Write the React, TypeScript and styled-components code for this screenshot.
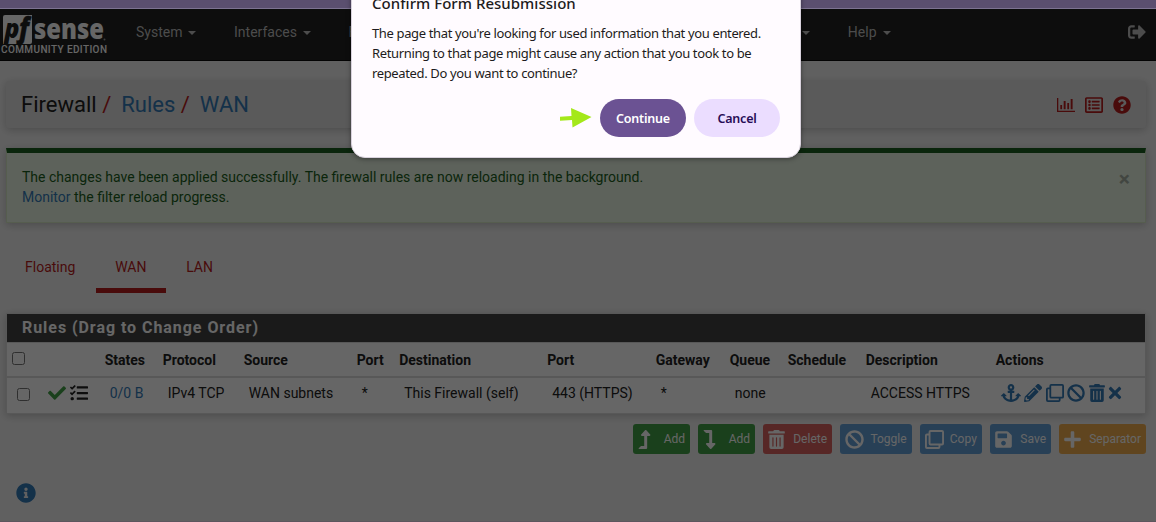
import React from 'react';
import styled, { createGlobalStyle, css } from 'styled-components';
import {
  FaAnchor, FaBan, FaCheck, FaInfoCircle, FaLevelDownAlt, FaLevelUpAlt, FaPencilAlt, FaPlus,
  FaQuestionCircle, FaRegListAlt, FaSave, FaSignOutAlt, FaTasks, FaTimes, FaTrashAlt,
} from 'react-icons/fa';

const Global = createGlobalStyle`
  *, *::before, *::after { box-sizing: border-box; }
  html, body { margin: 0; padding: 0; overflow: hidden; }
  body { font: 14px/20px Roboto, sans-serif; color: #212121; background: #f1f1f1; }
`;

const Page = styled.div`
  position: relative;
  width: 1156px;
  height: 522px;
  overflow: hidden;
  border-bottom: 1px solid #5c565e;
`;

const BrowserBar = styled.div`
  height: 9px;
  background: #5b4f6f;
  border-bottom: 1px solid #7d7391;
`;

const Header = styled.header`
  display: flex;
  height: 52px;
  background: #212121;
  border-bottom: 1px solid #080808;
`;

const Logo = styled.svg`
  width: 110px;
  height: 51px;
  flex: none;
`;

const Nav = styled.nav`
  display: flex;
  flex: 1;
  gap: 37.6px;
  padding: 13px 237.5px 0 26px;
  color: #bdbdbd;
`;

const NavItem = styled.span<{ $end?: boolean }>`
  display: flex;
  align-items: center;
  height: 20px;
  margin-left: ${(p) => (p.$end ? 'auto' : 0)};
  white-space: nowrap;

  &::after {
    content: '';
    margin-left: 6px;
    margin-top: 2px;
    border: 4px solid transparent;
    border-top-color: #bdbdbd;
    border-bottom: 0;
  }
`;

const LogoutLink = styled.span`
  display: flex;
  padding: 14px 10px 0 0;
  font-size: 18px;
  color: #bdbdbd;
`;

const Main = styled.main`
  padding: 20px 10px 0 6px;
`;

const shadow = css`
  box-shadow: 0 2px 8px rgba(0, 0, 0, 0.22);
`;

const Breadcrumb = styled.div`
  ${shadow}
  display: flex;
  align-items: center;
  height: 47px;
  padding: 0 15px;
  border-radius: 3px;
  background: #e0e0e0;
  font-size: 22px;
`;

const Slash = styled.span`
  margin: 0 10px 0 5.5px;
  color: #b71c1c;
`;

const Link = styled.a`
  color: #337ab7;
`;

const HelpIcons = styled.span`
  display: flex;
  gap: 10px;
  margin-left: auto;
  font-size: 18px;
  color: #b71c1c;
`;

const Alert = styled.div`
  ${shadow}
  display: flex;
  justify-content: space-between;
  height: 75px;
  margin-top: 20px;
  padding: 14px 15px 0 15px;
  border: 1px solid #d6e9c6;
  border-top: 5px solid #1b5e20;
  background: #e8f5e3;
  color: #1b5e20;
  p { margin: 0; }
`;

const CloseMark = styled.span`
  margin-top: 2px;
  font: bold 21px/21px Roboto, sans-serif;
  color: #a6b0a4;
`;

const Tabs = styled.div`
  display: flex;
  gap: 0.8px;
  margin-top: 29px;
`;

const Tab = styled.span<{ $active?: boolean }>`
  height: 41px;
  padding: 5px 20px 0 19px;
  border-bottom: 5px solid ${(p) => (p.$active ? '#b71c1c' : 'transparent')};
  color: #b71c1c;
`;

const Panel = styled.section`
  ${shadow}
  margin-top: 20px;
  border: 1px solid #ddd;
  background: #fff;
`;

const PanelTitle = styled.h2`
  height: 29px;
  margin: 0;
  padding: 0 15px;
  border-bottom: 1px solid #ddd;
  background: #424242;
  color: #fff;
  font: bold 16px/28px Roboto, sans-serif;
  letter-spacing: 0.95px;
`;

const Table = styled.table`
  width: 100%;
  table-layout: fixed;
  border-collapse: separate;
  border-spacing: 0;
  text-align: left;
  white-space: nowrap;

  th { height: 35px; padding: 1px 5px 0; border-bottom: 2px solid #ddd; font-weight: 700; }
  td { height: 35px; padding: 0 10px 5px; }
`;

const Checkbox = styled.input`
  display: block;
  width: 13px;
  height: 13px;
  margin: 0;
  th & { margin-bottom: 4px; }
  td & { margin-top: 2px; }
`;

const IconRow = styled.span<{ $color: string; $gap: number }>`
  display: flex;
  align-items: center;
  gap: ${(p) => p.$gap}px;
  font-size: 18px;
  color: ${(p) => p.$color};
  svg { flex: none; }
`;

const IconSlot = styled.span<{ $width: number }>`
  display: flex;
  flex: none;
  justify-content: center;
  width: ${(p) => p.$width}px;
`;

const Toolbar = styled.div`
  display: flex;
  justify-content: flex-end;
  gap: 8px;
  margin-top: 10px;
`;

const tones = { green: '#43a047', red: '#d9635f', blue: '#64a0d8', amber: '#f0ad4e' };

const ToolButton = styled.button<{ $tone: keyof typeof tones; $width: number }>`
  display: flex;
  align-items: center;
  justify-content: space-between;
  width: ${(p) => p.$width}px;
  height: 30px;
  padding: 0 5px;
  border: 0;
  border-radius: 3px;
  background: ${(p) => tones[p.$tone]};
  color: #fff;
  font: 12px/18px Roboto, sans-serif;
  svg { flex: none; width: 19px; height: 19px; }
`;

const Info = styled.div`
  margin: 29px 0 0 10px;
  font-size: 20px;
  line-height: 0;
  color: #337ab7;
`;

const Backdrop = styled.div`
  position: absolute;
  inset: 9px 0 0;
  background: rgba(0, 0, 0, 0.6);
`;

const Dialog = styled.div`
  position: absolute;
  top: -30px;
  left: 351px;
  width: 450px;
  height: 188px;
  padding: 21px 20px;
  border: 1px solid #d9d2dd;
  border-radius: 14px;
  background: #fffbff;
  box-shadow: 0 1px 5px rgba(0, 0, 0, 0.4);
  color: #1d1b20;
  font-family: 'Noto Sans', sans-serif;

  h1 { margin: 0; font: 500 15px/22px 'Noto Sans', sans-serif; letter-spacing: 0.03px; }
  p { margin: 9px 0 0; font-size: 13px; line-height: 20px; letter-spacing: -0.36px; white-space: nowrap; }
`;

const DialogActions = styled.div`
  display: flex;
  align-items: center;
  justify-content: flex-end;
  gap: 8px;
  margin-top: 16px;
`;

const PillButton = styled.button<{ $primary?: boolean }>`
  width: 86px;
  height: 38px;
  padding: 1px 0 0;
  border: 0;
  border-radius: 19px;
  background: ${(p) => (p.$primary ? '#6b5293' : '#ebddff')};
  color: ${(p) => (p.$primary ? '#fff' : '#270d57')};
  font: 600 12.5px/20px 'Noto Sans', sans-serif;
  letter-spacing: -0.2px;
`;

const Chart = () => (
  <svg width="18" height="18" viewBox="0 0 18 18" fill="currentColor">
    <path d="M0 2h1.300v12.700H18V16H0zM3.300 9h1.800v4.200H3.300zM6.700 5h1.900v8.200H6.700zM10.300 7h1.800v6.200h-1.800zM13.700 3h1.900v10.200h-1.900z" />
  </svg>
);

const Clone = () => (
  <svg width="18" height="18" viewBox="0 0 18 18" fill="none" stroke="currentColor" strokeWidth="1.8" strokeLinejoin="round">
    <rect x="4.300" y="0.900" width="12.800" height="12.800" rx="1" />
    <path d="M4.300 4.300H1.900a1 1 0 0 0-1 1V16.100a1 1 0 0 0 1 1H12.700a1 1 0 0 0 1-1V13.700" />
  </svg>
);

const widths = [31, 61.7, 58, 81, 113, 42.5, 148, 108.5, 74, 58, 78, 130, 154.3];
const heads = ['States', 'Protocol', 'Source', 'Port', 'Destination', 'Port', 'Gateway', 'Queue', 'Schedule', 'Description', 'Actions'];
const rule = ['IPv4 TCP', 'WAN subnets', '*', 'This Firewall (self)', '443 (HTTPS)', '*', 'none', '', 'ACCESS HTTPS'];

export default function App() {
  return (
    <Page>
      <Global />
      <BrowserBar />
      <Header>
        <Logo viewBox="0 0 110 51">
          <path d="M5 6H32V33a2 2 0 0 1-2 2H3V8a2 2 0 0 1 2-2z" fill="#fff" />
          <text x="4.500" y="28.500" fontFamily="Open Sans" fontWeight="800" fontStyle="italic" fontSize="26" fill="#212121" textLength="15" lengthAdjust="spacingAndGlyphs">p</text>
          <text x="19" y="29" fontFamily="Open Sans" fontWeight="800" fontStyle="italic" fontSize="29" fill="#212121" stroke="#212121" strokeWidth="0.4" textLength="10" lengthAdjust="spacingAndGlyphs">f</text>
          <text x="34" y="30" fontFamily="Open Sans" fontWeight="800" fontSize="27.500" fill="#fff" textLength="70" lengthAdjust="spacingAndGlyphs">sense</text>
          <circle cx="104.5" cy="30.5" r="1" fill="#999" />
          <text x="1" y="44" fontFamily="Roboto" fontWeight="500" fontSize="10" fill="#fff" textLength="106">COMMUNITY EDITION</text>
        </Logo>
        <Nav>
          <NavItem>System</NavItem>
          <NavItem>Interfaces</NavItem>
          <NavItem>Firewall</NavItem>
          <NavItem $end />
          <NavItem>Help</NavItem>
        </Nav>
        <LogoutLink><FaSignOutAlt /></LogoutLink>
      </Header>
      <Main>
        <Breadcrumb>
          Firewall<Slash>/</Slash><Link>Rules</Link><Slash>/</Slash><Link>WAN</Link>
          <HelpIcons><Chart /><FaRegListAlt /><FaQuestionCircle /></HelpIcons>
        </Breadcrumb>
        <Alert>
          <p>
            The changes have been applied successfully. The firewall rules are now reloading in the background.<br />
            <Link>Monitor</Link> the filter reload progress.
          </p>
          <CloseMark>×</CloseMark>
        </Alert>
        <Tabs><Tab>Floating</Tab><Tab $active>WAN</Tab><Tab>LAN</Tab></Tabs>
        <Panel>
          <PanelTitle>Rules (Drag to Change Order)</PanelTitle>
          <Table>
            <colgroup>{widths.map((w, i) => <col key={i} width={w} />)}</colgroup>
            <thead>
              <tr>
                <th><Checkbox type="checkbox" /></th>
                <th />
                {heads.map((h, i) => <th key={i}>{h}</th>)}
              </tr>
            </thead>
            <tbody>
              <tr>
                <td><Checkbox type="checkbox" /></td>
                <td>
                  <IconRow $color="#212121" $gap={4}><FaCheck color="#43a047" /><FaTasks /></IconRow>
                </td>
                <td><Link>0/0 B</Link></td>
                {rule.map((c, i) => <td key={i}>{c}</td>)}
                <td>
                  <IconRow $color="#337ab7" $gap={3.6}>
                    <IconSlot $width={20}><FaAnchor size={20} /></IconSlot>
                    <FaPencilAlt />
                    <Clone />
                    <FaBan />
                    <IconSlot $width={16}><FaTrashAlt /></IconSlot>
                    <IconSlot $width={13}><FaTimes /></IconSlot>
                  </IconRow>
                </td>
              </tr>
            </tbody>
          </Table>
        </Panel>
        <Toolbar>
          <ToolButton $tone="green" $width={57}><IconSlot $width={13}><FaLevelUpAlt /></IconSlot>Add</ToolButton>
          <ToolButton $tone="green" $width={57}><IconSlot $width={13}><FaLevelDownAlt /></IconSlot>Add</ToolButton>
          <ToolButton $tone="red" $width={69}><IconSlot $width={17}><FaTrashAlt /></IconSlot>Delete</ToolButton>
          <ToolButton $tone="blue" $width={71.6}><FaBan />Toggle</ToolButton>
          <ToolButton $tone="blue" $width={62.2}><Clone />Copy</ToolButton>
          <ToolButton $tone="blue" $width={61.2}><IconSlot $width={17}><FaSave /></IconSlot>Save</ToolButton>
          <ToolButton $tone="amber" $width={87}><IconSlot $width={17}><FaPlus /></IconSlot>Separator</ToolButton>
        </Toolbar>
        <Info><FaInfoCircle /></Info>
      </Main>
      <Backdrop />
      <Dialog>
        <h1>Confirm Form Resubmission</h1>
        <p>
          The page that you're looking for used information that you entered.<br />
          Returning to that page might cause any action that you took to be<br />
          repeated. Do you want to continue?
        </p>
        <DialogActions>
          <svg width="32" height="20" viewBox="0 0 32 20" fill="#a4e81a"><path d="M0 8.7 11.5 8 11 0 31.500 9 12.500 19.500 12 12 0 12.800z" /></svg>
          <PillButton $primary>Continue</PillButton>
          <PillButton>Cancel</PillButton>
        </DialogActions>
      </Dialog>
    </Page>
  );
}
